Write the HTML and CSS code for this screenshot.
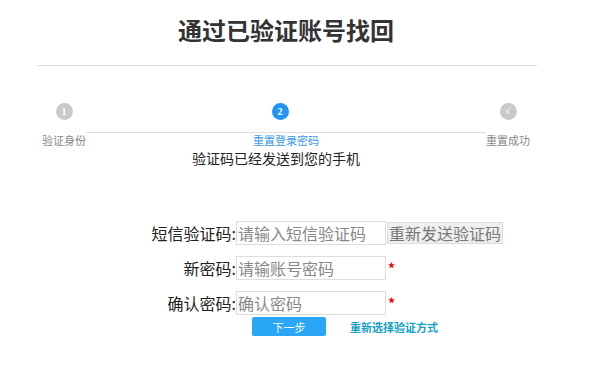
FILE: index.html
```html
<!DOCTYPE html>
<html lang="zh-CN">
<head>
  <meta charset="UTF-8" />
  <title>通过已验证账号找回</title>
  <meta name="viewport" content="width=device-width, initial-scale=1" />
  <link rel="stylesheet" href="styles.css">
</head>
<body>

  <div class="container">
    <div class="header">
      <h1>通过已验证账号找回</h1>
    </div>

    <div class="steps">
      <div class="step done">
        <span class="circle">1</span>
        <span class="label">验证身份</span>
      </div>
      <div class="step active">
        <span class="circle">2</span>
        <span class="label">重置登录密码</span>
      </div>
      <div class="step">
        <span class="circle check">√</span>
        <span class="label">重置成功</span>
      </div>
    </div>

    <p class="tip">验证码已经发送到您的手机</p>

    <form class="reset-form" onsubmit="return false">
      <div class="row">
        <label for="smsCode">短信验证码:</label>
        <input type="text" id="smsCode" placeholder="请输入短信验证码" />
        <button type="button" class="resend">重新发送验证码</button>
      </div>
      <div class="row">
        <label for="newPwd">新密码:</label>
        <input type="password" id="newPwd" placeholder="请输账号密码" />
        <span class="required">*</span>
      </div>
      <div class="row">
        <label for="confirmPwd">确认密码:</label>
        <input type="password" id="confirmPwd" placeholder="确认密码" />
        <span class="required">*</span>
      </div>
      <div class="actions">
        <button type="submit" class="next">下一步</button>
        <a href="#" class="switch">重新选择验证方式</a>
      </div>
    </form>
  </div>

</body>
</html>
```

FILE: styles.css
```css
* {
  box-sizing: border-box;
}
body {
  font-family: "Noto Sans CJK SC", "Liberation Sans", sans-serif;
  margin: 0;
  background: #fff;
  color: #222;
}
.container {
  width: 500px;
  margin-left: 37px;
}
.header {
  padding: 14px 0 19px;
  border-bottom: 1px solid #ddd;
}
h1 {
  margin: 0;
  text-align: center;
  font-size: 24px;
  line-height: 32px;
  font-weight: 700;
  color: #333;
  padding-right: 2px;
}
.steps {
  position: relative;
  display: flex;
  justify-content: space-between;
  margin: 37px 7px 0 5px;
}
.steps::before {
  content: "";
  position: absolute;
  top: 29px;
  left: 44px;
  right: 44px;
  border-top: 1px solid #ddd;
}
.step {
  display: flex;
  flex-direction: column;
  align-items: center;
}
.circle {
  width: 17px;
  height: 17px;
  border-radius: 50%;
  background: #c9c9c9;
  color: #fff;
  font-size: 10px;
  line-height: 17px;
  text-align: center;
  font-family: "Liberation Serif", serif;
  font-weight: 700;
}
.circle.check {
  font-family: "DejaVu Sans", sans-serif;
  font-weight: 400;
  font-size: 9px;
}
.step.active .circle {
  background: #2394f4;
  margin-right: 12px;
}
.label {
  position: relative;
  margin-top: 13px;
  font-size: 11px;
  line-height: 14px;
  color: #888;
  background: #fff;
}
.step.active .label {
  color: #3a98ea;
  background: transparent;
}
.tip {
  margin: 2px 0 0;
  padding-left: 155px;
  font-size: 14px;
  line-height: 18px;
  color: #222;
}
.reset-form {
  margin-top: 54px;
}
.row {
  display: flex;
  align-items: center;
  height: 24px;
  margin-bottom: 11px;
}
.row label {
  width: 199px;
  text-align: right;
  font-size: 16px;
  color: #222;
}
.row input {
  width: 150px;
  height: 24px;
  padding: 0 1px;
  border: 1px solid #ddd;
  font-family: inherit;
  font-size: 16px;
  color: #333;
  outline: none;
}
.row input::placeholder {
  color: #888;
}
.resend {
  height: 22px;
  margin-left: 1px;
  padding: 0 1px;
  border: 1px solid #ddd;
  background: #efefef;
  color: #777;
  font-family: inherit;
  font-size: 16px;
  line-height: 20px;
  cursor: pointer;
}
.required {
  margin-left: 2px;
  color: #e00;
  font-size: 14px;
  font-weight: 700;
}
.actions {
  display: flex;
  align-items: center;
  margin-top: -9px;
  padding-left: 215px;
}
.next {
  width: 74px;
  height: 19px;
  padding: 0;
  border: none;
  border-radius: 2px;
  background: #2aa6f6;
  color: #fff;
  font-family: inherit;
  font-size: 11px;
  cursor: pointer;
}
.switch {
  margin-left: 24px;
  color: #159fc6;
  font-size: 11px;
  font-weight: 700;
  text-decoration: none;
}
```
